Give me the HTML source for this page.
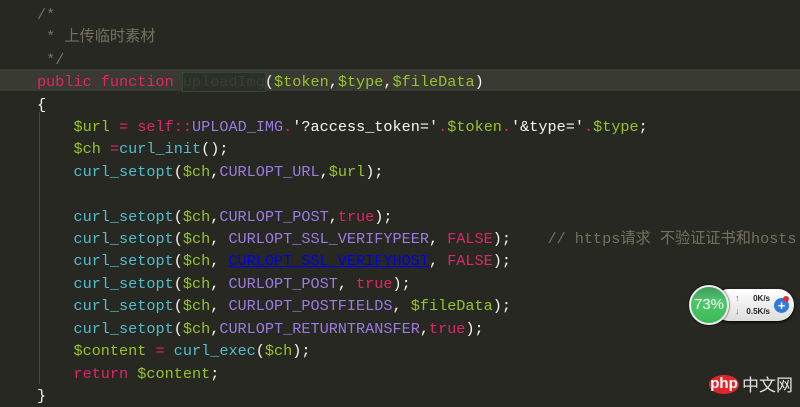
<!DOCTYPE html>
<html><head><meta charset="utf-8"><style>
body{margin:0;width:800px;height:404px;overflow:hidden;background:#272822;position:relative}
pre{margin:0;position:absolute;left:37px;top:4px;font-family:"Liberation Mono","Noto Sans CJK SC",monospace;font-size:15.2px;line-height:22.4px;color:#f8f8f2;white-space:pre}
.c{color:#75715e}.k{color:#e0246a}.v{color:#96c42c}.f{color:#53bccd}.p{color:#9d7ae0}.o{color:#e8e8e0}
.hl{position:absolute;left:0;top:69px;width:800px;height:22px;background:#3a3a33}
.guide{position:absolute;left:39px;top:112px;width:1px;height:272px;background:#46463f}
.sel{background:#2a2f28;outline:1px solid #2f4a2f;color:#3c3c36}
a{color:#0000ee;text-decoration:underline}
</style></head><body>
<div class="hl"></div><div class="guide"></div>
<pre><span class="c">/*
 * 上传临时素材
 */</span>
<span class="k">public</span> <span class="k">function</span> <span class="sel">uploadImg</span>(<span class="v">$token</span>,<span class="v">$type</span>,<span class="v">$fileData</span>)
{
    <span class="v">$url</span> <span class="k">=</span> <span class="k">self</span><span class="k">::</span><span class="p">UPLOAD_IMG</span><span class="k">.</span>'?access_token='<span class="k">.</span><span class="v">$token</span><span class="k">.</span>'&amp;type='<span class="k">.</span><span class="v">$type</span>;
    <span class="v">$ch</span> <span class="k">=</span><span class="f">curl_init</span>();
    <span class="f">curl_setopt</span>(<span class="v">$ch</span>,<span class="p">CURLOPT_URL</span>,<span class="v">$url</span>);

    <span class="f">curl_setopt</span>(<span class="v">$ch</span>,<span class="p">CURLOPT_POST</span>,<span class="k">true</span>);
    <span class="f">curl_setopt</span>(<span class="v">$ch</span>, <span class="p">CURLOPT_SSL_VERIFYPEER</span>, <span class="k">FALSE</span>);    <span class="c">// https请求 不验证证书和hosts</span>
    <span class="f">curl_setopt</span>(<span class="v">$ch</span>, <a>CURLOPT_SSL_VERIFYHOST</a>, <span class="k">FALSE</span>);
    <span class="f">curl_setopt</span>(<span class="v">$ch</span>, <span class="p">CURLOPT_POST</span>, <span class="k">true</span>);
    <span class="f">curl_setopt</span>(<span class="v">$ch</span>, <span class="p">CURLOPT_POSTFIELDS</span>, <span class="v">$fileData</span>);
    <span class="f">curl_setopt</span>(<span class="v">$ch</span>,<span class="p">CURLOPT_RETURNTRANSFER</span>,<span class="k">true</span>);
    <span class="v">$content</span> <span class="k">=</span> <span class="f">curl_exec</span>(<span class="v">$ch</span>);
    <span class="k">return</span> <span class="v">$content</span>;
}</pre>
<div style="position:absolute;left:713px;top:289px;width:81px;height:32px;border-radius:16px;background:linear-gradient(#fff,#ddd);box-shadow:0 1px 3px #000"></div>
<div style="position:absolute;left:735px;top:293px;font:9px 'Liberation Sans',sans-serif;color:#e04030">↑</div>
<div style="position:absolute;left:735px;top:306px;font:9px 'Liberation Sans',sans-serif;color:#30a050">↓</div>
<div style="position:absolute;left:748px;top:294px;width:22px;text-align:right;font:bold 8px 'Liberation Sans',sans-serif;color:#222">0K/s</div>
<div style="position:absolute;left:740px;top:307px;width:30px;text-align:right;font:bold 8px 'Liberation Sans',sans-serif;color:#222">0.5K/s</div>
<div style="position:absolute;left:774px;top:298px;width:15px;height:15px;border-radius:50%;background:#2f7be0;color:#fff;font:bold 13px/15px 'Liberation Sans',sans-serif;text-align:center">+</div>
<div style="position:absolute;left:783px;top:296px;width:6px;height:6px;border-radius:50%;background:#e03030"></div>
<div style="position:absolute;left:689px;top:285px;width:36px;height:36px;border-radius:50%;background:linear-gradient(#3f9a60 0%,#4cc868 40%,#3db958);border:2px solid #eee;box-shadow:0 0 2px #000;color:#fff;font:15px/36px 'Liberation Sans',sans-serif;text-align:center">73%</div>
<div style="position:absolute;left:709px;top:375px;width:30px;height:19px;border-radius:50%;background:#e0262b;color:#fff;font:bold 15px/17px 'Liberation Sans',sans-serif;text-align:center">php</div>
<div style="position:absolute;left:742px;top:374px;font:17px 'Noto Sans CJK SC',sans-serif;color:#e0e0e0;line-height:20px">中文网</div>
</body></html>
